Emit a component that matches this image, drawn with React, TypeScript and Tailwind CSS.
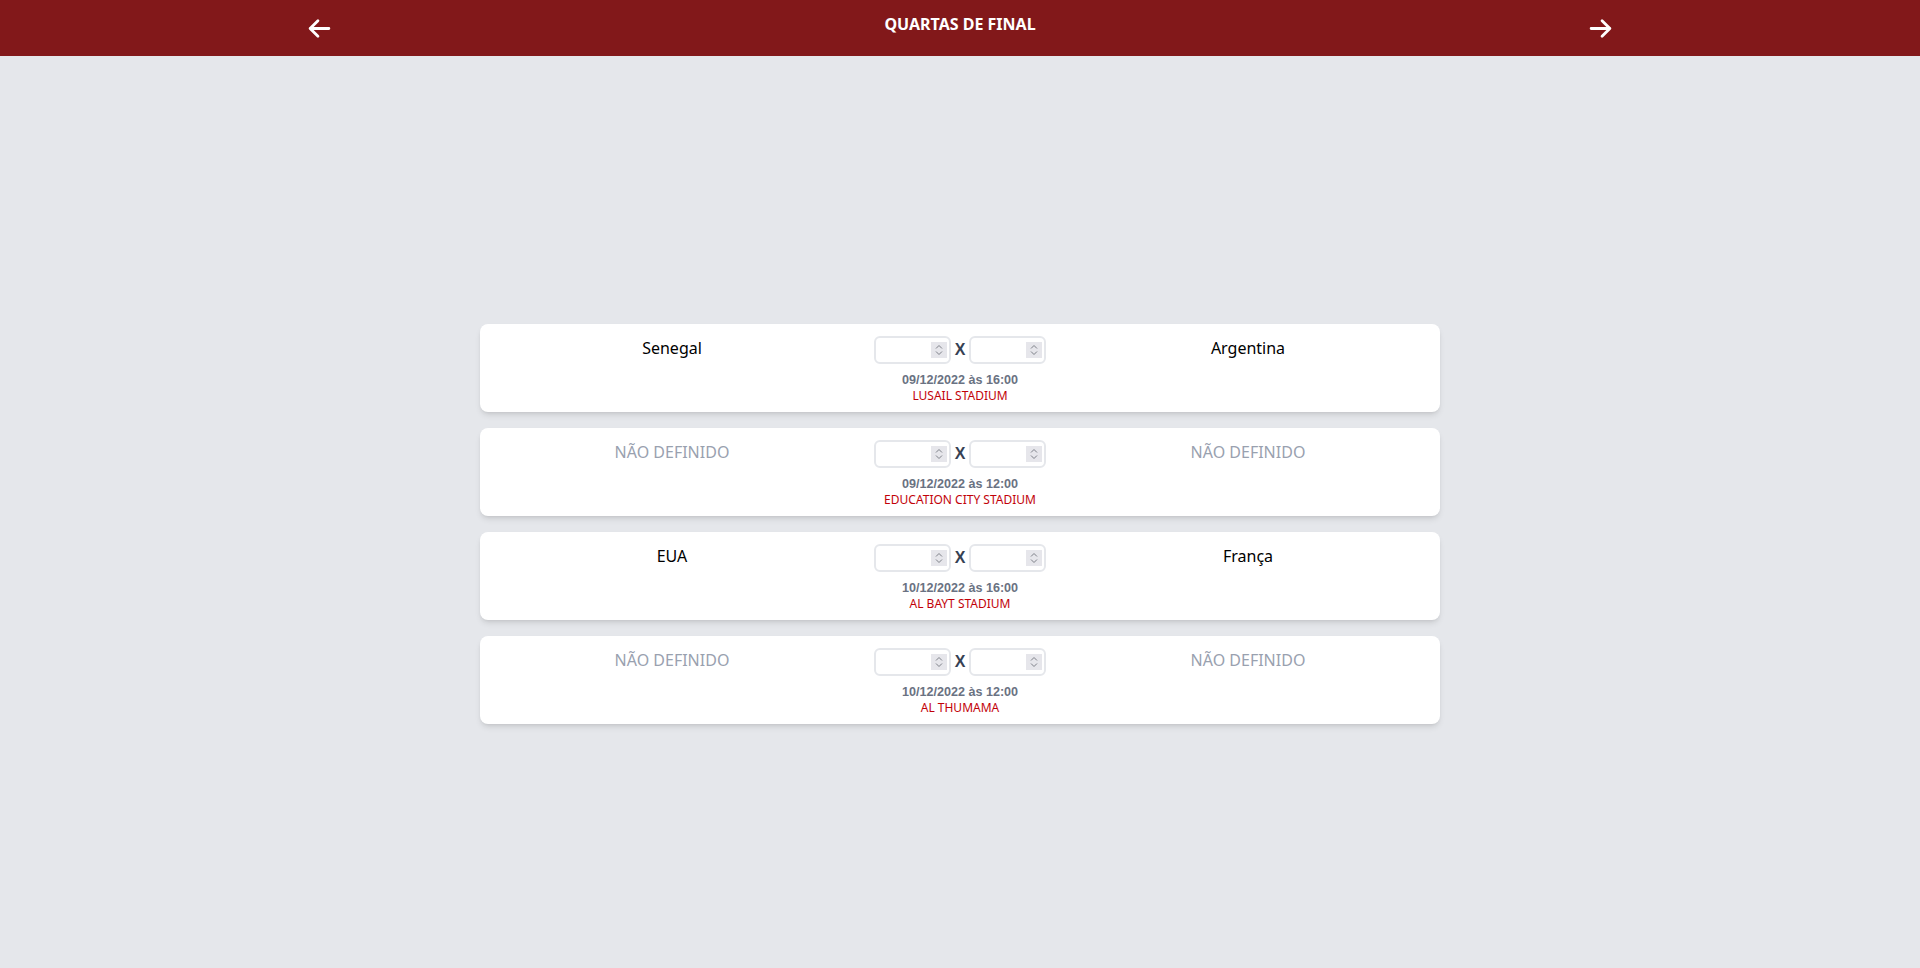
import React from "react";

interface Match {
  id: number;
  home: string | null;
  away: string | null;
  date: string;
  venue: string;
}

const matches: Match[] = [
  { id: 1, home: "Senegal", away: "Argentina", date: "09/12/2022 às 16:00", venue: "LUSAIL STADIUM" },
  { id: 2, home: null, away: null, date: "09/12/2022 às 12:00", venue: "EDUCATION CITY STADIUM" },
  { id: 3, home: "EUA", away: "França", date: "10/12/2022 às 16:00", venue: "AL BAYT STADIUM" },
  { id: 4, home: null, away: null, date: "10/12/2022 às 12:00", venue: "AL THUMAMA" },
];

function Arrow({ dir }: { dir: "left" | "right" }) {
  return (
    <svg
      width="25"
      height="25"
      viewBox="0 0 24 24"
      fill="none"
      stroke="white"
      strokeWidth={2.7}
      strokeLinecap="round"
      strokeLinejoin="round"
      className={dir === "right" ? "-scale-x-100" : ""}
    >
      <path d="M10.5 19.5 3 12m0 0 7.5-7.5M3 12h18" />
    </svg>
  );
}

function ScoreInput() {
  return (
    <div className="relative">
      <input
        type="number"
        className="w-[77px] h-7 border-2 border-gray-200 rounded-md bg-white px-2 text-sm outline-none [appearance:textfield] [&::-webkit-inner-spin-button]:appearance-none [&::-webkit-outer-spin-button]:appearance-none"
      />
      {/* fake spinner, native one only shows on hover */}
      <div className="absolute right-1 top-1.5 w-4 h-4 bg-[#e6e6eb] flex items-center justify-center pointer-events-none">
        <svg width="10" height="14" viewBox="0 0 10 14" fill="none" stroke="#7d8088" strokeWidth={1}>
          <path d="M2 5.5 5 2.5l3 3" />
          <path d="M2 8.5 5 11.5l3-3" />
        </svg>
      </div>
    </div>
  );
}

function TeamName({ name }: { name: string | null }) {
  return (
    <div className={`text-center text-base leading-6 ${name ? "text-black" : "text-gray-400"}`}>
      {name ?? "NÃO DEFINIDO"}
    </div>
  );
}

export default function App() {
  return (
    <div className="min-h-screen bg-gray-200 font-['Noto_Sans',sans-serif]">
      <header className="h-14 bg-red-900">
        <div className="w-[1306px] h-full mx-auto flex items-center justify-between">
          <button className="p-0">
            <Arrow dir="left" />
          </button>
          <h1 className="pb-2 text-white text-base leading-6 font-bold">QUARTAS DE FINAL</h1>
          <button className="p-0">
            <Arrow dir="right" />
          </button>
        </div>
      </header>

      <main className="w-1/2 mx-auto pt-[268px] flex flex-col gap-4">
        {matches.map(m => (
          <div key={m.id} className="bg-white rounded-lg shadow-md h-[88px] px-12 pt-3 grid grid-cols-3">
            <TeamName name={m.home} />
            <div className="flex flex-col items-center">
              <div className="flex items-center gap-1">
                <ScoreInput />
                <span className="text-gray-700 font-bold text-base leading-7 font-['Liberation_Sans',sans-serif]">X</span>
                <ScoreInput />
              </div>
              <div className="mt-2 text-[12.6px] leading-4 font-bold text-gray-500 font-['Liberation_Sans',sans-serif]">
                {m.date}
              </div>
              <div className="text-xs leading-4 text-red-700">{m.venue}</div>
            </div>
            <TeamName name={m.away} />
          </div>
        ))}
      </main>
    </div>
  );
}
